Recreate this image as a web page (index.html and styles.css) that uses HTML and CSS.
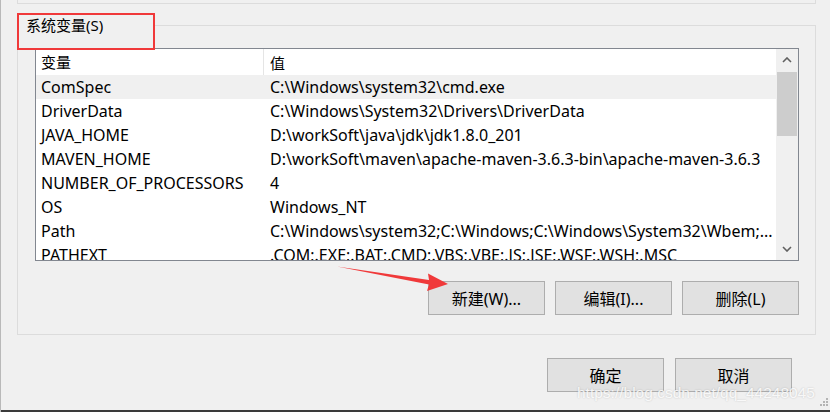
FILE: index.html
```html
<!DOCTYPE html>
<html lang="zh-CN">
<head>
  <meta charset="UTF-8" />
  <meta name="viewport" content="width=device-width, initial-scale=1.0" />
  <title>环境变量</title>
  <link rel="stylesheet" href="styles.css">
</head>
<body>
  <div class="dialog">
    <div class="prev-group"></div>

    <div class="group">
      <div class="group-title">系统变量(S)</div>

      <div class="listbox">
        <div class="list-main">
          <div class="list-head">
            <div class="col-name">变量</div>
            <div class="col-value">值</div>
          </div>
          <div class="row selected"><div class="col-name">ComSpec</div><div class="col-value">C:\Windows\system32\cmd.exe</div></div>
          <div class="row"><div class="col-name">DriverData</div><div class="col-value">C:\Windows\System32\Drivers\DriverData</div></div>
          <div class="row"><div class="col-name">JAVA_HOME</div><div class="col-value">D:\workSoft\java\jdk\jdk1.8.0_201</div></div>
          <div class="row"><div class="col-name">MAVEN_HOME</div><div class="col-value">D:\workSoft\maven\apache-maven-3.6.3-bin\apache-maven-3.6.3</div></div>
          <div class="row"><div class="col-name">NUMBER_OF_PROCESSORS</div><div class="col-value">4</div></div>
          <div class="row"><div class="col-name">OS</div><div class="col-value">Windows_NT</div></div>
          <div class="row"><div class="col-name">Path</div><div class="col-value">C:\Windows\system32;C:\Windows;C:\Windows\System32\Wbem;...</div></div>
          <div class="row"><div class="col-name">PATHEXT</div><div class="col-value">.COM;.EXE;.BAT;.CMD;.VBS;.VBE;.JS;.JSE;.WSF;.WSH;.MSC</div></div>
        </div>
        <div class="scrollbar">
          <div class="sb-btn">
            <svg width="10" height="6" viewBox="0 0 10 6"><polyline points="1,5 5,1 9,5" fill="none" stroke="#606060" stroke-width="1.6"/></svg>
          </div>
          <div class="sb-track"><div class="sb-thumb"></div></div>
          <div class="sb-btn">
            <svg width="10" height="6" viewBox="0 0 10 6"><polyline points="1,1 5,5 9,1" fill="none" stroke="#606060" stroke-width="1.6"/></svg>
          </div>
        </div>
      </div>

      <div class="group-buttons">
        <button class="btn">新建(W)...</button>
        <button class="btn">编辑(I)...</button>
        <button class="btn">删除(L)</button>
      </div>
    </div>

    <div class="dialog-buttons">
      <button class="btn">确定</button>
      <button class="btn">取消</button>
    </div>

    <div class="bottom-edge"></div>

    <!-- 标注 -->
    <div class="mark-box"></div>
    <svg class="mark-arrow" width="830" height="412" viewBox="0 0 830 412">
      <polygon points="337,266.5 429,280 428,273.5 448,284 427,291 429,284.5" fill="#f0393a"/>
    </svg>
    <div class="watermark">https://blog.csdn.net/qq_44248045</div>
    <svg class="grip" width="12" height="12" viewBox="0 0 12 12">
      <g fill="#b4b4b4">
        <rect x="9" y="1" width="2" height="2"/>
        <rect x="6" y="4" width="2" height="2"/><rect x="9" y="4" width="2" height="2"/>
        <rect x="3" y="7" width="2" height="2"/><rect x="6" y="7" width="2" height="2"/><rect x="9" y="7" width="2" height="2"/>
      </g>
    </svg>
  </div>
</body>
</html>
```

FILE: styles.css
```css
:root {
  --bg: #f0f0f0;
  --rahmen: #dcdcdc;
  --liste-rand: #828790;
  --knopf: #e1e1e1;
  --knopf-rand: #adadad;
  --rot: #f0393a;
}

* {
  box-sizing: border-box;
}

body {
  margin: 0;
  background-color: var(--bg);
  font-family: 'Noto Sans', 'Noto Sans CJK SC', sans-serif;
  color: #000;
}

.dialog {
  position: relative;
  width: 830px;
  height: 412px;
  overflow: hidden;
  border-left: 1px solid #b9b9b9;
}

.prev-group {
  margin-left: 16px;
  width: 799px;
  height: 4px;
  border: 1px solid var(--rahmen);
  border-top: none;
}

.group {
  margin-top: 21px;
  margin-left: 16px;
  width: 799px;
  height: 310px;
  border: 1px solid var(--rahmen);
  padding: 0 16px 0 17px;
}

.group-title {
  width: 135px;
  margin-top: -12px;
  margin-left: -17px;
  height: 22px;
  line-height: 22px;
  padding-left: 8px;
  background-color: var(--bg);
  font-size: 15px;
}

.listbox {
  display: flex;
  margin-top: 12px;
  height: 213px;
  border: 1px solid var(--liste-rand);
  background-color: #fff;
}

.list-main {
  flex: 1;
  overflow: hidden;
}

.list-head,
.row {
  display: flex;
  align-items: center;
  white-space: nowrap;
}

.list-head {
  height: 26px;
  font-size: 15px;
}

.row {
  height: 24px;
  font-size: 16px;
}

.row.selected {
  background-color: #f0f0f0;
}

.col-name {
  width: 228px;
  flex-shrink: 0;
  padding-left: 5px;
}

.list-head .col-name {
  border-right: 1px solid #e5e5e5;
  height: 26px;
  line-height: 26px;
}

.col-value {
  flex: 1;
  padding-left: 6px;
  overflow: hidden;
}

.scrollbar {
  width: 22px;
  display: flex;
  flex-direction: column;
  background-color: var(--bg);
}

.sb-btn {
  height: 22px;
  display: flex;
  align-items: center;
  justify-content: center;
}

.sb-track {
  flex: 1;
  padding: 1px 1px 0;
}

.sb-thumb {
  height: 64px;
  background-color: #cdcdcd;
}

.group-buttons {
  display: flex;
  justify-content: flex-end;
  gap: 10px;
  margin-top: 20px;
}

.btn {
  width: 117px;
  height: 34px;
  padding: 0;
  background-color: var(--knopf);
  border: 1px solid var(--knopf-rand);
  border-radius: 0;
  font-family: 'Noto Sans', 'Noto Sans CJK SC', sans-serif;
  font-size: 16px;
  color: #000;
}

.dialog-buttons {
  display: flex;
  justify-content: flex-end;
  gap: 11px;
  margin-top: 23px;
  padding-right: 38px;
}

.bottom-edge {
  margin-top: 18px;
  height: 2px;
  background-color: #3a3a3a;
}

.mark-box {
  position: absolute;
  left: 16px;
  top: 13px;
  width: 138px;
  height: 37px;
  border: 2px solid var(--rot);
}

.mark-arrow {
  position: absolute;
  left: -1px;
  top: 0;
  pointer-events: none;
}

.watermark {
  position: absolute;
  left: 576px;
  top: 384px;
  font-family: 'Liberation Sans', sans-serif;
  font-size: 15.5px;
  color: rgba(255, 255, 255, 0.85);
  text-shadow: 0 0 2px rgba(0, 0, 0, 0.2);
  white-space: nowrap;
}

.grip {
  position: absolute;
  right: 1px;
  bottom: 3px;
}
```
